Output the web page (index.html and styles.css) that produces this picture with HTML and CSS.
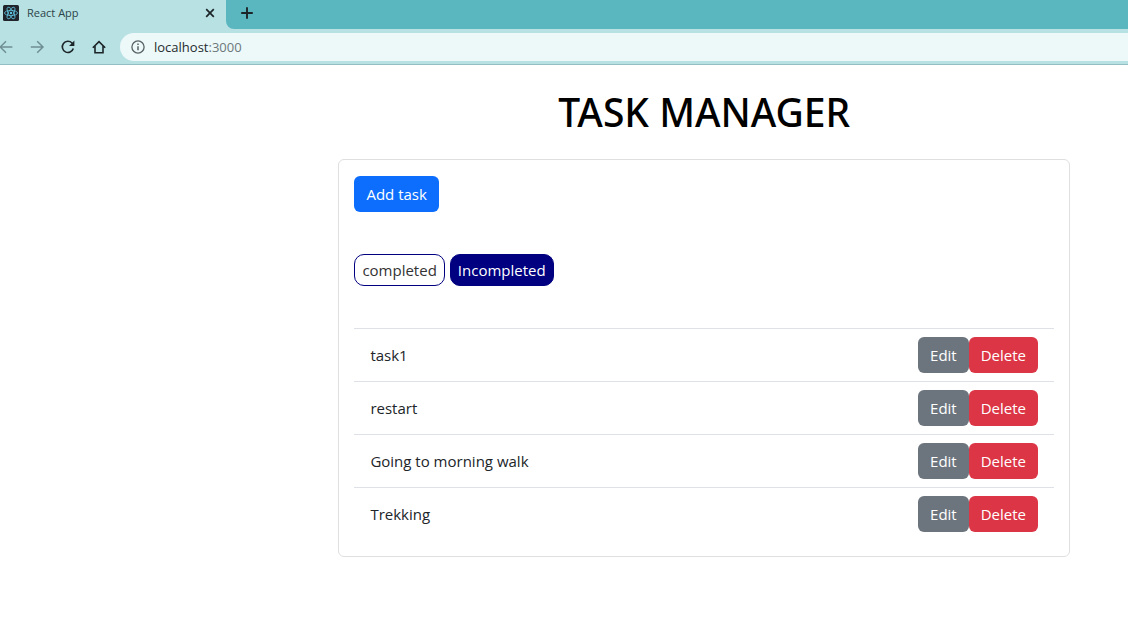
FILE: index.html
```
<!DOCTYPE html>
<html lang="en">
<head>
<meta charset="utf-8">
<title>React App</title>
<link rel="stylesheet" href="styles.css">
</head>
<body>
<header class="browser">
  <div class="tab-strip">
    <div class="tab">
      <svg class="favicon" viewBox="0 0 16 16" aria-hidden="true">
        <rect width="16" height="16" rx="1.5" fill="#20232a"/>
        <g fill="none" stroke="#61c5e0" stroke-width=".8">
          <ellipse cx="8" cy="8" rx="6.5" ry="2.6"/>
          <ellipse cx="8" cy="8" rx="6.5" ry="2.6" transform="rotate(60 8 8)"/>
          <ellipse cx="8" cy="8" rx="6.5" ry="2.6" transform="rotate(120 8 8)"/>
        </g>
        <circle cx="8" cy="8" r="1.2" fill="#61c5e0"/>
      </svg>
      <span class="tab-title">React App</span>
      <button class="icon-button" aria-label="Close tab">
        <svg class="icon" viewBox="0 0 16 16"><path d="M4.2 4.2l7.6 7.6M11.8 4.2l-7.6 7.6" stroke-width="1.7"/></svg>
      </button>
    </div>
    <div class="strip-rest">
      <button class="icon-button" aria-label="New tab">
        <svg class="icon" viewBox="0 0 16 16"><path d="M8 2.2v11.6M2.2 8h11.6" stroke-width="1.9"/></svg>
      </button>
    </div>
  </div>
  <div class="toolbar">
    <nav class="nav-buttons" aria-label="Browser">
      <button class="icon-button muted" aria-label="Back">
        <svg class="icon" viewBox="0 0 16 16"><path d="M14.4 8H2.4M8 2.2L2.2 8 8 13.8"/></svg>
      </button>
      <button class="icon-button muted" aria-label="Forward">
        <svg class="icon" viewBox="0 0 16 16"><path d="M1.8 8h12M8.2 2.2L14 8l-5.8 5.8"/></svg>
      </button>
      <button class="icon-button" aria-label="Reload">
        <svg class="icon" viewBox="0 0 16 16"><path d="M13.3 9.5A5.6 5.6 0 1 1 12 4l1 1" stroke-width="1.6"/><path d="M14.4 1.6v5.4H9z" fill="currentColor" stroke="none"/></svg>
      </button>
      <button class="icon-button" aria-label="Home">
        <svg class="icon" viewBox="0 0 16 16"><path d="M1.8 8.8L8 2.6l6.2 6.2M4 7v6.7h8V7" stroke-width="1.6"/></svg>
      </button>
    </nav>
    <div class="address">
      <svg class="icon info" viewBox="0 0 16 16" aria-hidden="true"><circle cx="8" cy="8" r="6.1" stroke-width="1.3"/><path d="M8 7.2v4M8 4.4v1.5" stroke-width="1.5"/></svg>
      <span class="url">localhost<span class="port">:3000</span></span>
    </div>
  </div>
</header>
<main class="page">
  <h1 class="title">TASK MANAGER</h1>
  <section class="card">
    <button class="btn btn-primary">Add task</button>
    <div class="filters">
      <button class="filter">completed</button>
      <button class="filter active">Incompleted</button>
    </div>
    <ul class="tasks">
      <li class="task"><span class="task-name">task1</span><button class="btn btn-secondary">Edit</button><button class="btn btn-danger">Delete</button></li>
      <li class="task"><span class="task-name">restart</span><button class="btn btn-secondary">Edit</button><button class="btn btn-danger">Delete</button></li>
      <li class="task"><span class="task-name">Going to morning walk</span><button class="btn btn-secondary">Edit</button><button class="btn btn-danger">Delete</button></li>
      <li class="task"><span class="task-name">Trekking</span><button class="btn btn-secondary">Edit</button><button class="btn btn-danger">Delete</button></li>
    </ul>
  </section>
</main>
</body>
</html>
```
FILE: styles.css
```
* { box-sizing: border-box; }
body {
  margin: 0;
  background: #fff;
  color: #212529;
  font: 15px/24px "Open Sans", "Noto Sans", sans-serif;
}
button { font: inherit; cursor: pointer; }

.browser {
  background: #b8e1e4;
  border-bottom: 1px solid #93bfc4;
}
.tab-strip { display: flex; height: 29px; }
.tab {
  display: flex;
  align-items: center;
  width: 226px;
  padding: 0 8px 4px 3px;
}
.favicon { width: 16px; height: 16px; }
.tab-title { flex: 1; margin-left: 8px; font-size: 11px; color: #2c4447; }
.strip-rest {
  flex: 1;
  display: flex;
  align-items: center;
  padding: 0 13px 4px;
  background: #5ab7c0;
  border-bottom-left-radius: 8px;
}
.icon-button {
  display: flex;
  padding: 0;
  border: 0;
  background: none;
  color: #1c2527;
}
.muted { color: #6f8f94; }
.icon {
  width: 16px;
  height: 16px;
  fill: none;
  stroke: currentColor;
  stroke-width: 1.5;
}
.toolbar { display: flex; align-items: center; height: 35px; }
.nav-buttons { display: flex; gap: 15px; margin-left: -2px; }
.address {
  flex: 1;
  display: flex;
  align-items: center;
  gap: 8px;
  height: 28px;
  margin-left: 13px;
  padding-left: 10px;
  background: #edf8f9;
  border-radius: 14px 0 0 14px;
  font-size: 13px;
}
.info { color: #566164; }
.url { color: #252c2e; }
.port { color: #6c787a; }

.page { margin: 0 58px 0 30%; padding-top: 22px; }
.title {
  margin: 0 0 22px;
  color: #000;
  font-family: "Noto Sans", "Open Sans", sans-serif;
  font-size: 39px;
  font-weight: 500;
  line-height: 50px;
  text-align: center;
}
.card {
  padding: 16px 15px;
  border: 1px solid #dfdfdf;
  border-radius: 6px;
}
.btn {
  height: 36px;
  padding: 0 12px;
  border: 0;
  border-radius: 6px;
  color: #fff;
}
.btn-primary { background: #0d6efd; }
.btn-secondary { background: #6c757d; }
.btn-danger { background: #dc3545; }
.filters { display: flex; gap: 5px; margin: 42px 0; }
.filter {
  height: 32px;
  padding: 0 7px;
  border: 1px solid #000080;
  border-radius: 10px;
  background: #fff;
  color: #333;
}
.filter.active { background: #000080; color: #fff; }
.tasks { margin: 0; padding: 0; list-style: none; }
.task {
  display: flex;
  align-items: center;
  padding: 8px 16px;
  border-top: 1px solid #dee2e6;
}
.task-name { flex: 1; }
```
